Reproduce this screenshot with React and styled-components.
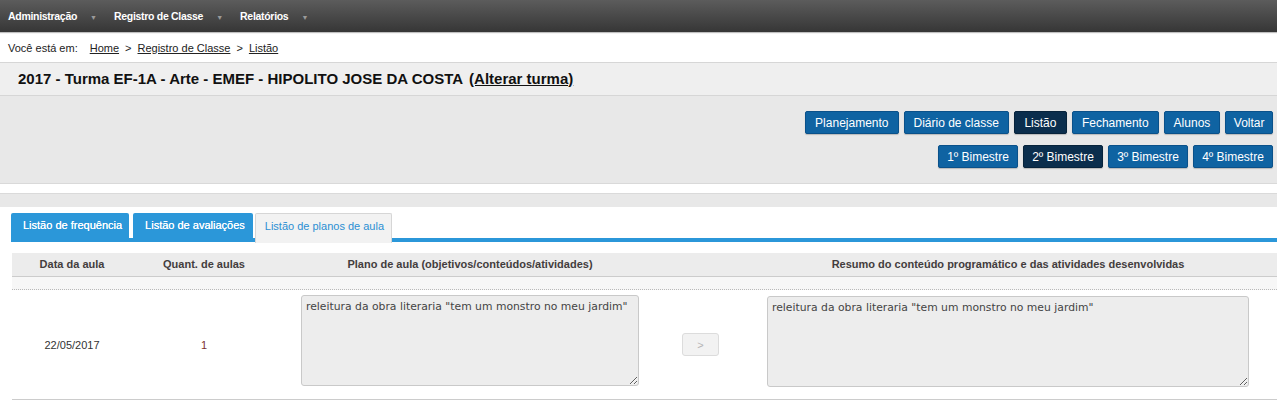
import React from "react";
import styled, { createGlobalStyle } from "styled-components";

const Global = createGlobalStyle`
  html, body { margin: 0; padding: 0; background: #fff; }
  body { font-family: "Liberation Sans", Arial, sans-serif; color: #222; }
  * { box-sizing: border-box; }
`;

const Nav = styled.nav`
  height: 32px;
  background: linear-gradient(#5c5c5c, #363636);
  display: flex;
  align-items: center;
  padding-left: 8px;
  box-shadow: 0 1px 1px rgba(0,0,0,0.25);
  position: relative;
`;

const NavItem = styled.div`
  display: flex;
  align-items: center;
  color: #fff;
  font-weight: bold;
  font-size: 10.5px;
  letter-spacing: -0.3px;
  margin-right: ${(p) => p.$gap}px;
`;

const Caret = styled.span`
  color: #9a9a9a;
  font-size: 7px;
  margin-left: ${(p) => p.$off}px;
  padding-top: 2px;
  letter-spacing: 0;
`;

const Crumbs = styled.div`
  height: 30px;
  display: flex;
  align-items: center;
  padding-left: 8px;
  padding-top: 2px;
  font-size: 11px;
  color: #222;
`;

const CrumbLabel = styled.span`
  margin-right: 12px;
`;

const CrumbLink = styled.a`
  color: #222;
  text-decoration: underline;
`;

const Sep = styled.span`
  margin: 0 6px;
`;

const TitleBar = styled.div`
  height: 34px;
  border-top: 1px solid #d6d6d6;
  border-bottom: 1px solid #d6d6d6;
  background: #efefef;
  display: flex;
  align-items: center;
  padding-left: 18px;
  padding-bottom: 2px;
  font-size: 15px;
  font-weight: bold;
  color: #111;
`;

const TitleLink = styled.a`
  margin-left: 6px;
  color: #111;
  text-decoration: underline;
`;

const ButtonPanel = styled.div`
  background: #e8e8e8;
  border-bottom: 1px solid #d9d9d9;
  padding: 15px 4px 15px 0;
  display: flex;
  flex-direction: column;
  align-items: flex-end;
  gap: 11px;
`;

const ButtonRow = styled.div`
  display: flex;
  gap: 5px;
`;

const Btn = styled.button`
  height: 23px;
  padding: 0 ${(p) => p.$pad ?? 8}px;
  min-width: ${(p) => p.$min || 0}px;
  border: 1px solid ${(p) => (p.$active ? "#07233b" : "#0a518a")};
  border-radius: 2px;
  background: ${(p) => (p.$active ? "#0b2e4d" : "#0f63a2")};
  color: #fff;
  font-family: "Liberation Sans", Arial, sans-serif;
  font-size: 12px;
  box-shadow: 0 1px 1px rgba(0,0,0,0.2);
  cursor: pointer;
`;

const Spacer = styled.div`
  height: 9px;
  background: #fff;
`;

const GrayStrip = styled.div`
  height: 14px;
  border-top: 1px solid #dadada;
  background: #e8e8e8;
`;

const Content = styled.div`
  padding: 6px 0 0 11px;
`;

const Tabs = styled.div`
  display: flex;
  align-items: flex-start;
  border-bottom: 4px solid #2b97d9;
  height: 29px;
`;

const Tab = styled.div`
  height: ${(p) => (p.$active ? 30 : 25)}px;
  line-height: 25px;
  margin-right: ${(p) => p.$mr}px;
  padding: 0 ${(p) => p.$pr}px 0 ${(p) => p.$pl}px;
  font-size: 11px;
  border-radius: 2px 2px 0 0;
  background: ${(p) => (p.$active ? "#f2f2f2" : "#2b97d9")};
  color: ${(p) => (p.$active ? "#2b8fd2" : "#fff")};
  border: ${(p) => (p.$active ? "1px solid #d6d6d6" : "none")};
  border-bottom: none;
  position: relative;
  z-index: 1;
  text-shadow: ${(p) => (p.$active ? "none" : "0 0 0.4px #fff")};
`;

const Table = styled.div`
  margin: 11px 0 0 1px;
`;

const Grid = styled.div`
  display: grid;
  grid-template-columns: 120px 144px 388px 75px 1fr;
`;

const HeadRow = styled(Grid)`
  height: 24px;
  background: #ececec;
  border-bottom: 1px solid #cccccc;
  align-items: center;
`;

const HeadCell = styled.div`
  text-align: center;
  font-size: 11px;
  font-weight: bold;
  color: #433d3d;
  padding-bottom: 1px;
`;

const Stripe = styled.div`
  height: 13px;
  background: #f7f7f7;
  border-bottom: 1px dotted #b9b9b9;
`;

const DataRow = styled(Grid)`
  height: 110px;
  border-bottom: 1px solid #cccccc;
  align-items: center;
`;

const Cell = styled.div`
  text-align: center;
  font-size: 11px;
  color: ${(p) => p.$color || "#333"};
  display: flex;
  justify-content: center;
  align-items: center;
`;

const Area = styled.textarea`
  width: ${(p) => p.$w}px;
  height: 91px;
  margin-top: ${(p) => p.$mt}px;
  background: #ededed;
  border: 1px solid #c9c9c9;
  border-radius: 3px;
  padding: 4px 4px;
  font-family: Verdana, "DejaVu Sans", sans-serif;
  font-size: 10.8px;
  color: #444;
  resize: vertical;
  outline: none;
`;

const ArrowBtn = styled.button`
  width: 37px;
  height: 23px;
  margin-right: 2px;
  background: #f2f2f2;
  border: 1px solid #dcdcdc;
  border-radius: 3px;
  color: #b5b5b5;
  font-size: 11px;
  font-family: "Liberation Sans", Arial, sans-serif;
  padding: 0;
`;

const text = 'releitura da obra literaria "tem um monstro no meu jardim"';

export default function App() {
  return (
    <>
      <Global />
      <Nav>
        <NavItem $gap={17}>Administração<Caret $off={13}>▼</Caret></NavItem>
        <NavItem $gap={17}>Registro de Classe<Caret $off={13}>▼</Caret></NavItem>
        <NavItem $gap={0}>Relatórios<Caret $off={13}>▼</Caret></NavItem>
      </Nav>
      <Crumbs>
        <CrumbLabel>Você está em:</CrumbLabel>
        <CrumbLink>Home</CrumbLink>
        <Sep>&gt;</Sep>
        <CrumbLink>Registro de Classe</CrumbLink>
        <Sep>&gt;</Sep>
        <CrumbLink>Listão</CrumbLink>
      </Crumbs>
      <TitleBar>
        2017 - Turma EF-1A - Arte - EMEF - HIPOLITO JOSE DA COSTA
        <TitleLink>(Alterar turma)</TitleLink>
      </TitleBar>
      <ButtonPanel>
        <ButtonRow>
          <Btn $pad={9}>Planejamento</Btn>
          <Btn $pad={9}>Diário de classe</Btn>
          <Btn $active $pad={9.5}>Listão</Btn>
          <Btn $pad={9}>Fechamento</Btn>
          <Btn $pad={9}>Alunos</Btn>
          <Btn $pad={7.5}>Voltar</Btn>
        </ButtonRow>
        <ButtonRow>
          <Btn $min={80}>1º Bimestre</Btn>
          <Btn $min={80} $active>2º Bimestre</Btn>
          <Btn $min={80}>3º Bimestre</Btn>
          <Btn $min={80}>4º Bimestre</Btn>
        </ButtonRow>
      </ButtonPanel>
      <Spacer />
      <GrayStrip />
      <Content>
        <Tabs>
          <Tab $mr={4} $pl={12} $pr={7}>Listão de frequência</Tab>
          <Tab $mr={2} $pl={12} $pr={8}>Listão de avaliações</Tab>
          <Tab $active $mr={0} $pl={9} $pr={7}>Listão de planos de aula</Tab>
        </Tabs>
        <Table>
          <HeadRow>
            <HeadCell>Data da aula</HeadCell>
            <HeadCell>Quant. de aulas</HeadCell>
            <HeadCell>Plano de aula (objetivos/conteúdos/atividades)</HeadCell>
            <HeadCell />
            <HeadCell>Resumo do conteúdo programático e das atividades desenvolvidas</HeadCell>
          </HeadRow>
          <Stripe />
          <DataRow>
            <Cell>22/05/2017</Cell>
            <Cell $color="#7b3030">1</Cell>
            <Cell>
              <Area $w={338} $mt={-8} defaultValue={text} />
            </Cell>
            <Cell>
              <ArrowBtn>&gt;</ArrowBtn>
            </Cell>
            <Cell>
              <Area $w={482} $mt={-6} defaultValue={text} />
            </Cell>
          </DataRow>
        </Table>
      </Content>
    </>
  );
}
